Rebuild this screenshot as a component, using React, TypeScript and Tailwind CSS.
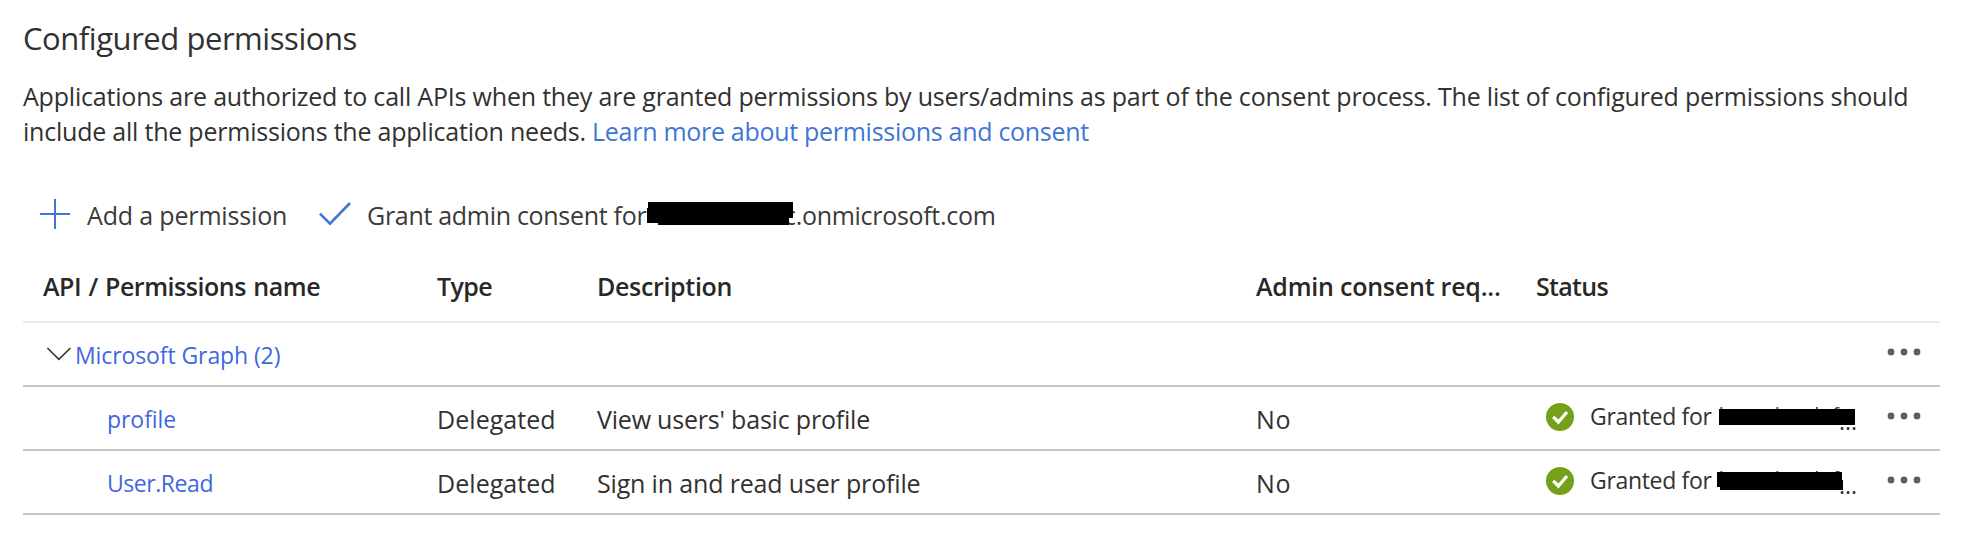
import type { ReactNode } from "react";

const GRID = "grid grid-cols-[414px_160px_659px_280px_404px]";

function PlusIcon() {
  return (
    <svg className="size-[30px] shrink-0" viewBox="0 0 30 30" fill="none" stroke="#3f76d6" strokeWidth="2">
      <path d="M15 0V30M0 15H30" />
    </svg>
  );
}

function CheckIcon() {
  return (
    <svg className="h-[24px] w-[32px] shrink-0" viewBox="0 0 32 24" fill="none" stroke="#3f76d6" strokeWidth="2.6">
      <path d="M0.9 11.6L11 21.6L31 1" />
    </svg>
  );
}

function ChevronIcon() {
  return (
    <svg className="h-[14px] w-[26px] shrink-0" viewBox="0 0 26 14" fill="none" stroke="#323130" strokeWidth="1.5">
      <path d="M1.4 1L12.9 12.4L24.4 1" />
    </svg>
  );
}

function GrantedIcon() {
  return (
    <svg className="size-[28px] shrink-0" viewBox="0 0 28 28" fill="none">
      <circle cx="14" cy="14" r="14" fill="#75a018" />
      <path d="M7.2 13.9L12.4 19L21 9" stroke="#fff" strokeWidth="3.4" />
    </svg>
  );
}

function MoreIcon() {
  return (
    <svg className="h-[8px] w-[34px]" viewBox="0 0 34 8" fill="#605e5c">
      <circle cx="4" cy="4" r="3.4" />
      <circle cx="17" cy="4" r="3.4" />
      <circle cx="30" cy="4" r="3.4" />
    </svg>
  );
}

function Status({ mask }: { mask: ReactNode }) {
  return (
    <div className="relative flex h-[60px] items-center pl-[10px]">
      <GrantedIcon />
      <span className="ml-[16px] -mt-[2px] text-[23px] tracking-[-0.32px]">Granted for</span>
      <svg className="absolute left-[179px] top-[16px] h-[26px] w-[142px]" viewBox="0 0 142 26">
        <path
          d="M5.5 4h1.7v4h-1.7zM61.5 4h1.7v4h-1.7zM101 4h1.7v4h-1.7zM119.5 7v-1.2q.6-1.8 2.8-1.8h2.2v1.4h-2q-1.2 0-1.4 1.6z"
          fill="#444"
        />
        {mask}
      </svg>
      <span className="absolute left-[303px] top-[14px] text-[23px] tracking-[-0.1px]">...</span>
      <div className="absolute left-[351px] top-[25px] flex">
        <MoreIcon />
      </div>
    </div>
  );
}

const rows = [
  {
    name: "profile",
    nameClass: "tracking-[-0.05px]",
    description: "View users' basic profile",
    descriptionClass: "tracking-[-0.2px]",
    mask: <path d="M4 6H140V22H4z" fill="#000" />,
  },
  {
    name: "User.Read",
    nameClass: "tracking-[-0.45px]",
    description: "Sign in and read user profile",
    descriptionClass: "tracking-[-0.16px]",
    mask: <path d="M2 5H127V13H128V23H5V20H2z" fill="#000" />,
  },
];

export default function App() {
  return (
    <main className="h-[536px] bg-white pt-[18px] pl-[23px] font-['Open_Sans','Noto_Sans',sans-serif] text-[25px] leading-[40px] whitespace-nowrap text-[#323130]">
      <h1 className="text-[31px] tracking-[-0.45px]">Configured permissions</h1>
      <p className="mt-[21px] leading-[35px] tracking-[-0.2px]">
        Applications are authorized to call APIs when they are granted permissions by users/admins as part of the consent process. The list of configured permissions should
        <br />
        <span className="tracking-[-0.22px]">include all the permissions the application needs. </span>
        <a className="tracking-[-0.29px] text-[#3f76d6]">Learn more about permissions and consent</a>
      </p>

      <div className="mt-[46px] flex h-[40px] text-[#3b3a39]">
        <button className="flex items-center pl-[17px]">
          <span className="-mt-[2px]"><PlusIcon /></span>
          <span className="ml-[17px] w-[200px] text-left tracking-[-0.16px]">Add a permission</span>
        </button>
        <button className="relative ml-[32px] flex items-center">
          <span className="-mt-[2px] flex"><CheckIcon /></span>
          <span className="ml-[16px] w-[417px] text-left tracking-[-0.3px]">Grant admin consent for</span>
          <span className="absolute left-[465px] tracking-[-0.3px]">c.onmicrosoft.com</span>
          <svg className="absolute left-[328px] top-[7px] h-[23px] w-[146px]" viewBox="0 0 146 23">
            <path d="M1 0H146V16H142V23H11V21H0V6H1z" />
          </svg>
        </button>
      </div>

      <section className="w-[1917px]">
        <div className={`${GRID} h-[88px] border-b-2 border-[#eaeaea] pt-[31px] font-semibold text-[#292827]`}>
          <div className="pl-[20px] tracking-[-0.45px] [word-spacing:1.2px]">API / Permissions name</div>
          <div className="tracking-[-0.6px]">Type</div>
          <div className="tracking-[-0.33px]">Description</div>
          <div className="tracking-[-0.22px]">Admin consent req...</div>
          <div className="tracking-[-0.7px]">Status</div>
        </div>

        <div className="flex h-[64px] items-center border-b-2 border-[#c8c8c8] pl-[23px]">
          <ChevronIcon />
          <a className="mt-[2px] ml-[3px] flex-1 text-[23px] tracking-[-0.1px] text-[#3f68e0]">Microsoft Graph (2)</a>
          <div className="mr-[19px] -mt-[4px] flex">
            <MoreIcon />
          </div>
        </div>

        {rows.map((row) => (
          <div key={row.name} className={`${GRID} h-[64px] border-b-2 border-[#c8c8c8]`}>
            <a className={`pt-[12px] pl-[84px] text-[23px] text-[#3f68e0] ${row.nameClass}`}>{row.name}</a>
            <div className="pt-[12px] tracking-[0.05px]">Delegated</div>
            <div className={`pt-[12px] ${row.descriptionClass}`}>{row.description}</div>
            <div className="pt-[12px] tracking-[0.8px]">No</div>
            <Status mask={row.mask} />
          </div>
        ))}
      </section>
    </main>
  );
}
